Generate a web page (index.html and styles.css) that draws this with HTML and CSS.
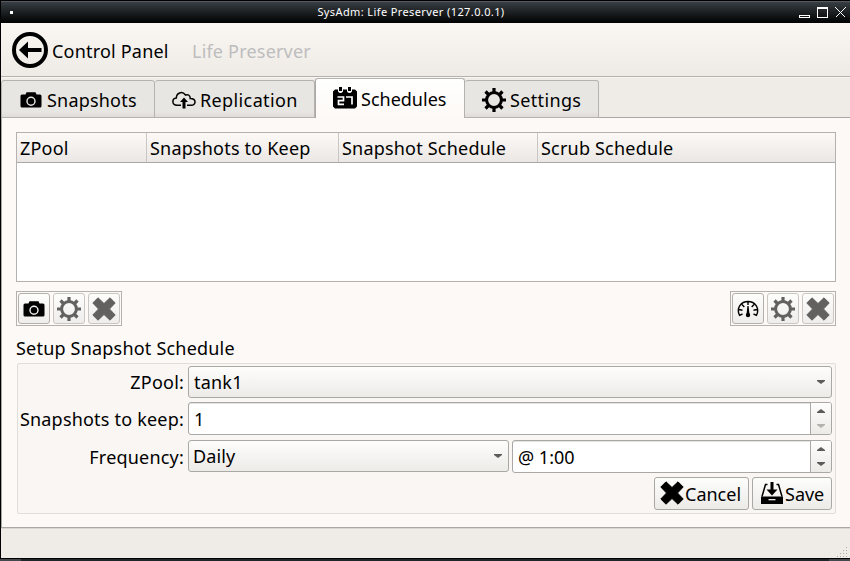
FILE: index.html
```html
<!DOCTYPE html>
<html lang="en">
<head>
<meta charset="utf-8">
<title>SysAdm: Life Preserver (127.0.0.1)</title>
<link rel="stylesheet" href="styles.css">
</head>
<body>
<svg class="defs" width="0" height="0" aria-hidden="true">
  <symbol id="camera" viewBox="0 0 22 16"><path fill="currentColor" fill-rule="evenodd" d="M2 2.500h3.500L6.500.3h9l1 2.200H20q1.500 0 1.500 1.500v10q0 1.500-1.500 1.500H2Q.5 15.500.5 14V4Q.5 2.500 2 2.500zM11 4.500a4.700 4.700 0 1 0 0 9.400 4.700 4.700 0 0 0 0-9.400zM11 5.900a3.300 3.300 0 1 1 0 6.600 3.300 3.300 0 0 1 0-6.600z"/></symbol>
  <symbol id="gear" viewBox="0 0 24 24"><g stroke="currentColor" fill="none"><circle cx="12" cy="12" r="7.400" stroke-width="3"/><path stroke-width="3.200" d="M12 0v4M12 20v4M0 12h4M20 12h4M3.500 3.500l3 3M17.500 17.500l3 3M3.500 20.500l3-3M17.500 6.500l3-3"/></g></symbol>
  <symbol id="cross" viewBox="0 0 24 24"><path fill="currentColor" stroke="currentColor" stroke-width="1" stroke-linejoin="round" d="M6 .8L12 6.500 18 .8 23.200 6 17.500 12l5.700 6L18 23.200l-6-5.700-6 5.700L.8 18l5.700-6L.8 6z"/></symbol>
</svg>
<div class="window">
  <header class="titlebar">
    <span class="dot"></span>
    <span class="title">SysAdm: Life Preserver (127.0.0.1)</span>
    <svg class="controls" width="48" height="12" viewBox="0 0 48 12" fill="none" stroke="#fff" shape-rendering="crispEdges"><path d="M.5 8.500h10v2h-10zM18.500.5h10v10h-10zM18 1.500h11M36.500.5l10 10M46.500.5l-10 10"/></svg>
  </header>
  <nav class="toolbar">
    <svg width="36" height="36" viewBox="0 0 36 36"><circle cx="18" cy="18" r="16" fill="none" stroke="#000" stroke-width="4"/><path d="M7 18l9-8.500v6.500h13.500v4H16v6.500z"/></svg>
    <span class="back">Control Panel</span>
    <span class="crumb">Life Preserver</span>
  </nav>
  <div class="tabs">
    <div class="tab t1"><svg width="22" height="16"><use href="#camera"/></svg><span>Snapshots</span></div>
    <div class="tab t2"><svg width="24" height="18" viewBox="0 0 24 18"><path fill="none" stroke="#000" stroke-width="1.500" d="M9 14.300H5C-.5 14-.2 7.500 4.300 7 4.500 2 10-.5 13.500 4c2.500-1 5 .5 4.700 3.500 6.500 0 6 6.800 1 6.800H15"/><path d="M12 6.500l4 4.500h-2.500v6.500h-3V11H8z"/></svg><span>Replication</span></div>
    <div class="tab t3 active"><svg width="24" height="22" viewBox="0 0 24 22"><path d="M2 2.500h3v2q2.500 3 5 0v-2h4v2q2.500 3 5 0v-2h3l2 2v15l-2 2H2l-2-2v-15z"/><path d="M7.500 0v4M16.500 0v4" stroke="#000" stroke-width="3"/><path d="M4.500 10h6v3.700h-5v3.700h5.500M13 10h6v7.500" fill="none" stroke="#fff" stroke-width="1.700"/></svg><span>Schedules</span></div>
    <div class="tab t4"><svg width="24" height="24"><use href="#gear"/></svg><span>Settings</span></div>
  </div>
  <main class="pane">
    <div class="table">
      <div class="thead"><span>ZPool</span><span>Snapshots to Keep</span><span>Snapshot Schedule</span><span>Scrub Schedule</span></div>
    </div>
    <div class="actions">
      <div class="group">
        <div class="btn"><svg width="22" height="16"><use href="#camera"/></svg></div>
        <div class="btn off"><svg width="24" height="24"><use href="#gear"/></svg></div>
        <div class="btn off"><svg width="24" height="24"><use href="#cross"/></svg></div>
      </div>
      <div class="group">
        <div class="btn"><svg width="22" height="18" viewBox="0 0 22 18"><path fill="none" stroke="#000" stroke-width="1.400" d="M5.500 14l-3 1.300C-1 8 4 1.500 11 1.500S23 8 19.500 15.300l-3-1.300M2 9.500l3.500.8M20 9.500l-3.500.8M5 4.500l2.300 2.500M17 4.500L14.700 7M11 2v3"/><path d="M10.400 6h1.200l.8 7.500H9.600z"/><circle cx="11" cy="15" r="2.200"/></svg></div>
        <div class="btn off"><svg width="24" height="24"><use href="#gear"/></svg></div>
        <div class="btn off"><svg width="24" height="24"><use href="#cross"/></svg></div>
      </div>
    </div>
    <div class="heading">Setup Snapshot Schedule</div>
    <div class="form">
      <div class="row"><label>ZPool:</label><div class="combo">tank1<i class="down"></i></div></div>
      <div class="row r2"><label>Snapshots to keep:</label><div class="spin"><span>1</span><div class="steps"><i class="up"></i><i class="down dim"></i></div></div></div>
      <div class="row r3"><label>Frequency:</label><div class="combo freq">Daily<i class="down"></i></div><div class="spin time"><span>@ 1:00</span><div class="steps"><i class="up"></i><i class="down"></i></div></div></div>
      <div class="buttons">
        <div class="push cancel"><svg width="24" height="24"><use href="#cross"/></svg><span>Cancel</span></div>
        <div class="push save"><svg width="22" height="22" viewBox="0 0 22 22"><path fill="none" stroke="#000" stroke-width="1.500" d="M6.500 2.500h-2L1 14.500M15.500 2.500h2L21 14.500"/><path d="M0 14.500h22V22H0z"/><path d="M7.500 17.700h7" stroke="#fff" stroke-width="1.200"/><path d="M9.500 0h3v7.500h4L11 13.500 5.500 7.500h4z"/></svg><span>Save</span></div>
      </div>
    </div>
  </main>
  <footer class="status"><svg width="13" height="13" viewBox="0 0 13 13" fill="none" stroke="#aaa8a5" stroke-dasharray="1 2"><path d="M9 2.500h3M6 5.500h6M3 8.500h9M0 11.500h12"/></svg></footer>
</div>
<div class="desktop"><span></span><span></span></div>
</body>
</html>
```
FILE: styles.css
```css
* { box-sizing: border-box; }
body { margin: 0; width: 850px; height: 561px; overflow: hidden; background: #000; color: #000; font: 18px/24px "Noto Sans", sans-serif; letter-spacing: .2px; }
.defs { display: none; }
svg { display: block; flex: none; }
span, label, .heading { white-space: nowrap; }
.window { height: 559px; padding: 1px 0 1px 1px; display: flex; flex-direction: column; }
.titlebar { height: 22px; flex: none; display: grid; grid-template-columns: 1fr auto 1fr; align-items: center; padding: 0 3px 0 9px; background: linear-gradient(#383e43, #000); border-top: 1px solid #555a60; color: #fff; }
.title { font-size: 11px; line-height: 20px; margin: -2px 35px 0 0; letter-spacing: .39px; }
.dot { width: 3px; height: 3px; background: #fff; }
.controls { justify-self: end; }
.toolbar { height: 54px; flex: none; display: flex; align-items: center; padding-left: 11px; background: linear-gradient(#faf7f2, #eeebe7); border-bottom: 1px solid #b5b2ae; }
.back { margin-left: 4px; width: 140px; padding-top: 3px; }
.crumb { color: #bdbdbe; padding-top: 3px; }
.tabs { height: 41px; flex: none; display: flex; align-items: flex-end; background: linear-gradient(#aaa8a5, #aaa8a5) 0 100% / 100% 1px no-repeat #efebe7; border-top: 1px solid #f8f6f3; }
.tab { height: 38px; display: flex; align-items: center; gap: 4px; border: 1px solid #b5b2af; border-left: 0; border-radius: 3px 3px 0 0; background: linear-gradient(#e8e6e2 85%, #dedbd8); padding-top: 1px; }
.t1 { width: 154px; padding-left: 18px; gap: 5px; border-left: 1px solid #b5b2af; }
.t2 { width: 160px; padding-left: 17px; letter-spacing: .38px; }
.t4 { width: 134px; padding-left: 17px; letter-spacing: .35px; }
.tab.active { width: 150px; height: 40px; padding: 0 0 0 17px; border-left: 1px solid #aaa8a5; border-bottom: 0; background: linear-gradient(#fff, #fdf9f6); letter-spacing: 0; }
.t3 svg { margin-top: -2px; }
.pane { height: 410px; flex: none; padding: 14px 14px 0 14px; background: #fdf9f6; border: solid #aaa8a5; border-width: 0 0 1px 1px; }
.table { height: 150px; background: #fff; border: 1px solid #b4b1af; }
.thead { height: 30px; display: grid; grid-template-columns: 130px 192px 199px 1fr; background: linear-gradient(#fcf9f6, #eae7e4); border-bottom: 1px solid #aaa8a5; }
.thead span { padding: 3px 0 0 3px; border-right: 1px solid #c9c6c3; }
.thead span:last-child { border: 0; }
.actions { display: flex; justify-content: space-between; margin-top: 9px; }
.group { width: 106px; height: 35px; display: flex; gap: 3px; padding: 1px; border: 1px solid #b4b1af; }
.btn { width: 32px; height: 31px; display: flex; align-items: center; justify-content: center; border: 1px solid #b2afad; border-radius: 3px; background: linear-gradient(#fdfdfc, #efedeb); }
.off { color: #62615f; border-color: #c9c6c3; }
.heading { height: 37px; padding-top: 10px; }
.form { height: 151px; margin-left: 1px; padding: 2px 3px 0 1px; background: #f9f6f3; border: 1px solid #e1deda; border-radius: 2px; }
.row { display: flex; height: 32px; }
.row label { width: 165px; margin-right: 4px; display: flex; justify-content: flex-end; padding-top: 4px; }
.r2, .r3 { height: 33px; margin-top: 4px; }
.row.r2 label, .row.r3 label { padding-top: 5px; }
.r3 { margin-top: 5px; }
.combo { flex: 1; height: 32px; display: flex; align-items: center; justify-content: space-between; padding: 0 6px 0 5px; border: 1px solid #aaa8a5; border-radius: 3px; background: linear-gradient(#fdfdfc, #edebe8); }
.freq { flex: 0 0 321px; margin-right: 3px; padding-left: 4px; letter-spacing: .1px; }
.spin { flex: 1; height: 33px; display: flex; justify-content: space-between; border: 1px solid #aaa8a5; border-radius: 3px; background: #fff; box-shadow: inset 0 1px #e4e2e0; letter-spacing: 0; }
.spin span { padding: 4px 0 0 5px; }
.steps { width: 21px; display: flex; flex-direction: column; align-items: center; gap: 11px; padding-top: 6px; border-left: 1px solid #aaa8a5; background: linear-gradient(#fdfdfc, #edebe8); border-radius: 0 2px 2px 0; }
.up, .down { width: 8px; height: 4px; background: #5c5b59; clip-path: polygon(0 0, 100% 0, 100% 25%, 50% 100%, 0 25%); }
.up { transform: rotate(180deg); }
.dim { background: #b5b3b0; }
.buttons { display: flex; justify-content: flex-end; gap: 3px; margin-top: 4px; letter-spacing: 0; }
.push { height: 33px; display: flex; align-items: center; border: 1px solid #aaa8a5; border-radius: 3px; background: linear-gradient(#fdfdfc, #edebe8); }
.push svg { margin-top: -1px; }
.cancel { width: 95px; padding-left: 5px; gap: 1px; }
.save { width: 80px; padding-left: 8px; gap: 2px; }
.status { height: 30px; flex: none; display: flex; justify-content: flex-end; align-items: flex-end; background: #efebe7; border-top: 1px solid #dad6d2; }
.desktop { height: 2px; display: flex; justify-content: space-between; background: #20252b; }
.desktop span { width: 21px; background: #45494e; }
```
